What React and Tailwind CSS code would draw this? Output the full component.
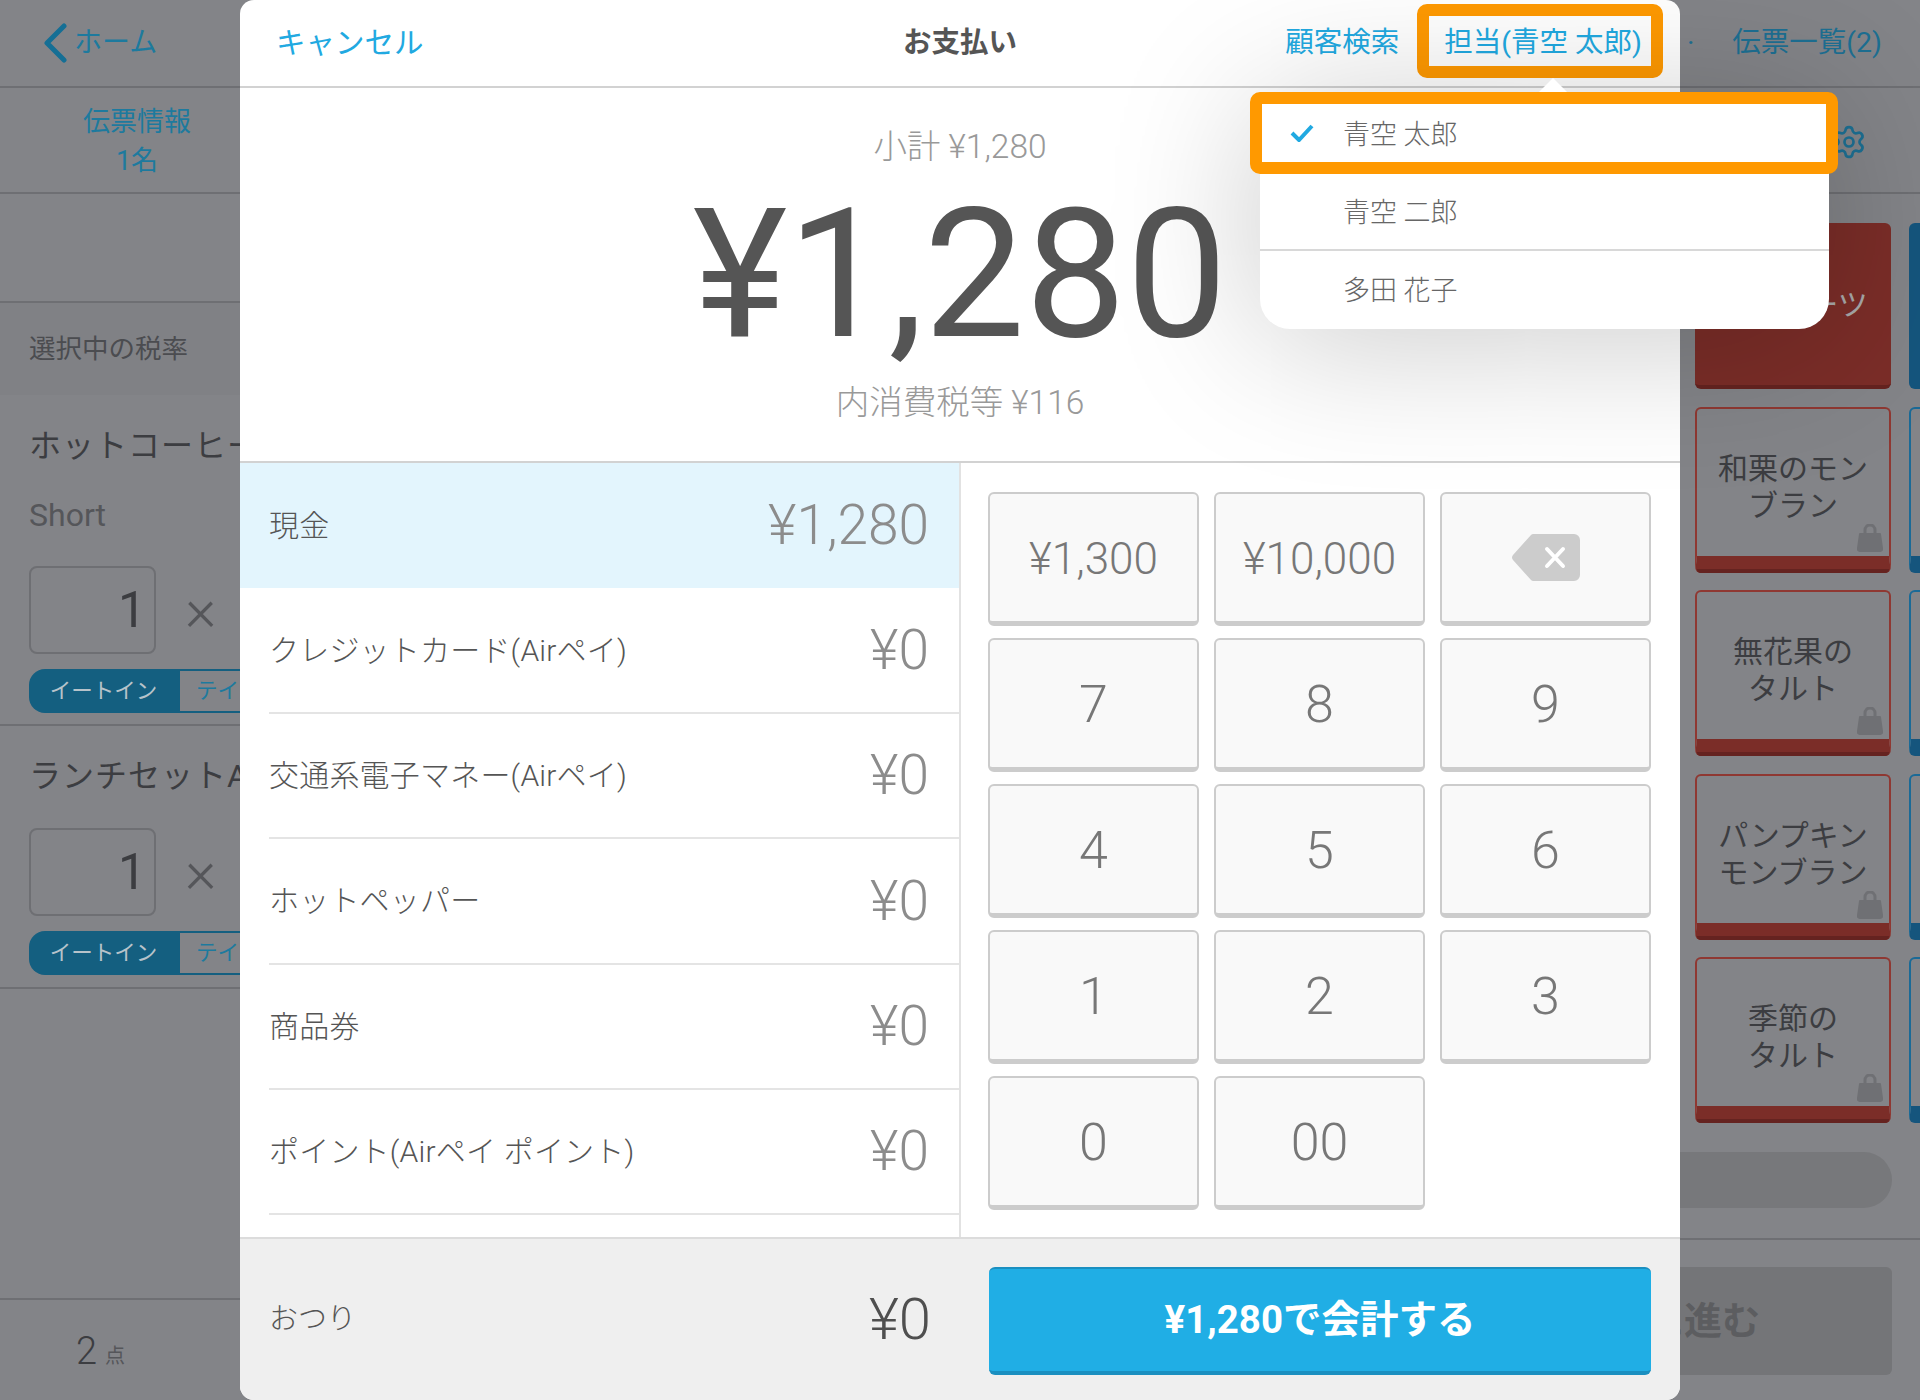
import React from 'react';
import { Settings } from 'lucide-react';

const FONT = "font-['Roboto','Noto_Sans_CJK_JP',sans-serif]";

const payments = [
  { label: '現金', amount: '¥1,280', active: true },
  { label: 'クレジットカード(Airペイ)', amount: '¥0' },
  { label: '交通系電子マネー(Airペイ)', amount: '¥0' },
  { label: 'ホットペッパー', amount: '¥0' },
  { label: '商品券', amount: '¥0' },
  { label: 'ポイント(Airペイ ポイント)', amount: '¥0' },
];

const keys = ['¥1,300', '¥10,000', 'back', '7', '8', '9', '4', '5', '6', '1', '2', '3', '0', '00'];

const tiles = [
  ['和栗のモン', 'ブラン'],
  ['無花果の', 'タルト'],
  ['パンプキン', 'モンブラン'],
  ['季節の', 'タルト'],
];

function Bag() {
  return (
    <svg className="absolute right-[6px] bottom-[4px]" width="26" height="28" viewBox="0 0 26 28" fill="#6f7074">
      <path d="M8 10V6a5 5 0 0 1 10 0v4" fill="none" stroke="#6f7074" strokeWidth="3" />
      <path d="M3 9h20a1 1 0 0 1 1 1l2 14a3 3 0 0 1-3 4H3a3 3 0 0 1-3-4l2-14a1 1 0 0 1 1-1z" />
    </svg>
  );
}

function Qty() {
  return (
    <div className="flex items-center">
      <div className="w-[127px] h-[88px] rounded-[8px] border-2 border-[#6e6f73] flex items-center justify-end pr-[8px] text-[50px] font-normal text-[#3c3d41]">1</div>
      <div className="ml-[29px] text-[60px] leading-[60px] font-light text-[#55565a]">×</div>
    </div>
  );
}

function Seg() {
  return (
    <div className="flex w-[300px] h-[44px] mt-[15px] text-[21.5px]">
      <div className="w-[149px] bg-[#145f80] rounded-l-[16px] flex items-center justify-center text-[#b7c3ca]">イートイン</div>
      <div className="flex-1 border-2 border-[#145f80] flex items-center pl-[16px] text-[#1d7a9e] whitespace-nowrap">テイクアウト</div>
    </div>
  );
}

function Payment() {
  return (
    <div className="absolute left-[240px] top-0 w-[1440px] h-[1400px] bg-white rounded-[14px] flex flex-col">
      <div className="h-[88px] shrink-0 border-b-2 border-[#d2d2d2] grid grid-cols-[1fr_auto_1fr] items-center text-[28.5px] text-[#21a9e1]">
        <div className="pl-[36px] text-[29.5px]">キャンセル</div>
        <div className="font-semibold text-[#555] text-[28.5px]">お支払い</div>
        <div className="flex justify-end pr-[38px] gap-[45px] whitespace-nowrap">
          <span>顧客検索</span>
          <span>担当(青空 太郎)</span>
        </div>
      </div>

      <div className="h-[375px] shrink-0 border-b-2 border-[#d2d2d2] flex flex-col items-center pt-[35px]">
        <div className="text-[33.5px] leading-[48px] font-light text-[#999]">小計 ¥1,280</div>
        <div className="text-[180px] leading-[180px] font-normal text-[#555] mt-[14px]">¥1,280</div>
        <div className="text-[33.5px] leading-[48px] font-light text-[#999] mt-[14px]">内消費税等 ¥116</div>
      </div>

      <div className="flex-1 flex min-h-0">
        <div className="w-[721px] border-r-2 border-[#e2e2e2]">
          {payments.map((p) => (
            <div key={p.label} className={p.active ? 'h-[125.4px] bg-[#e3f5fd] pl-[29px]' : 'h-[125.4px] pl-[29px]'}>
              <div className={p.active ? 'h-full flex items-center justify-between pr-[30px]' : 'h-full flex items-center justify-between pr-[30px] border-b-2 border-[#e4e4e4]'}>
                <span className="text-[30px] font-light tracking-[0.2px] text-[#555]">{p.label}</span>
                <span className="text-[55px] font-light text-[#8c8c8c]">{p.amount}</span>
              </div>
            </div>
          ))}
        </div>
        <div className="flex-1 pl-[27px] pt-[29px]">
          <div className="grid grid-cols-[211px_211px_211px] auto-rows-[134px] gap-x-[15px] gap-y-[12px]">
            {keys.map((k) => (
              <div key={k} className="rounded-[6px] bg-[#f9f9f9] border-2 border-b-[5px] border-[#cccccc] flex items-center justify-center pt-[3px] text-[#777] font-light">
                {k === 'back' ? (
                  <svg className="-mt-[3px]" width="68" height="47" viewBox="0 0 68 47">
                    <path d="M22 0h40a6 6 0 0 1 6 6v35a6 6 0 0 1-6 6H22a4 4 0 0 1-3-1L1 26a4 4 0 0 1 0-5L19 1a4 4 0 0 1 3-1z" fill="#cccccc" />
                    <path d="M35 15l16 17M51 15L35 32" stroke="#fff" strokeWidth="4" strokeLinecap="round" />
                  </svg>
                ) : (
                  <span className={k.startsWith('¥') ? 'text-[44px]' : 'text-[52px]'}>{k}</span>
                )}
              </div>
            ))}
          </div>
        </div>
      </div>

      <div className="h-[163px] shrink-0 bg-[#efefef] border-t-2 border-[#dcdcdc] rounded-b-[14px] flex">
        <div className="w-[721px] pl-[29px] pr-[30px] flex items-center justify-between">
          <span className="text-[29px] font-light text-[#555]">おつり</span>
          <span className="text-[58px] font-light text-[#4f4f4f]">¥0</span>
        </div>
        <div className="flex-1 pl-[28px] pr-[29px] pt-[28px]">
          <div className="h-[108px] rounded-[6px] bg-[#20aee5] border-t-2 border-b-[4px] border-[#1a8fc0] flex items-center justify-center text-[38.5px] font-bold text-white">¥1,280で会計する</div>
        </div>
      </div>

      {/* 担当 highlight */}
      <div className="absolute left-[1177px] top-[4px] w-[246px] h-[74px] border-[12px] border-[#ff9900] rounded-[10px]" />

      {/* staff popover */}
      <div className="absolute left-[1020px] top-[95px] w-[569px] h-[234px] bg-white rounded-b-[30px] rounded-t-[14px] shadow-[0_10px_150px_rgba(0,0,0,0.22)] text-[27px] font-light text-[#666]">
        <div className="absolute left-[276px] -top-[17px] w-0 h-0 border-x-[17px] border-x-transparent border-b-[17px] border-b-white" />
        <div className="h-[78px] flex items-center pl-[83px] pt-[2px] relative">
          <svg className="absolute left-[30px] top-[29px]" width="24" height="18" viewBox="0 0 24 18" fill="none">
            <path d="M2 9l7 7L22 2" stroke="#21a9e1" strokeWidth="4" />
          </svg>
          青空 太郎
        </div>
        <div className="h-[78px] flex items-center pl-[83px] pt-[4px] border-b-2 border-[#d8d8d8]">青空 二郎</div>
        <div className="h-[78px] flex items-center pl-[83px] pt-[2px]">多田 花子</div>
      </div>
      <div className="absolute left-[1010px] top-[92px] w-[588px] h-[82px] border-[12px] border-[#ff9900] rounded-[10px]" />
    </div>
  );
}

export default function App() {
  return (
    <div className={`relative w-[1920px] h-[1400px] overflow-hidden flex bg-[#838488] ${FONT}`}>
      <div className="w-[360px] shrink-0 flex flex-col text-[#1d7a9e]">
        <div className="h-[88px] shrink-0 border-b-2 border-[#6e6f73] flex items-center pl-[43px] gap-[7px]">
          <svg width="24" height="42" viewBox="0 0 24 42" fill="none">
            <path d="M21 4L4 21l17 17" stroke="#156f95" strokeWidth="5" strokeLinecap="round" strokeLinejoin="round" />
          </svg>
          <span className="text-[28px]">ホーム</span>
        </div>
        <div className="h-[106px] shrink-0 border-b-2 border-[#6e6f73] w-full">
          <div className="w-[274px] text-center text-[27px] leading-[39px] pt-[15px]">
            <div>伝票情報</div>
            <div>1名</div>
          </div>
        </div>
        <div className="h-[109px] shrink-0 border-b-2 border-[#6e6f73]" />
        <div className="h-[92px] shrink-0 bg-[#808185] flex items-center pl-[29px] text-[26.5px] text-[#4b4c50]">選択中の税率</div>

        <div className="h-[331px] shrink-0 border-b-2 border-[#6e6f73] pl-[29px] flex flex-col">
          <div className="text-[32px] leading-[40px] tracking-[1px] text-[#3c3d41] mt-[31px] whitespace-nowrap">ホットコーヒー</div>
          <div className="text-[32px] leading-[40px] text-[#55565a] mt-[29px]">Short</div>
          <div className="mt-[31px]"><Qty /></div>
          <Seg />
        </div>

        <div className="h-[263px] shrink-0 border-b-2 border-[#6e6f73] pl-[29px] flex flex-col">
          <div className="text-[32px] leading-[40px] tracking-[1px] text-[#3c3d41] mt-[30px] whitespace-nowrap">ランチセットA</div>
          <div className="mt-[32px]"><Qty /></div>
          <Seg />
        </div>

        <div className="flex-1 border-b-2 border-[#6e6f73]" />
        <div className="h-[100px] shrink-0 flex items-end pb-[27px] pl-[76px] text-[#3c3d41]">
          <span className="text-[38px] font-light leading-[44px]">2</span>
          <span className="text-[20px] ml-[8px] leading-[34px] text-[#55565a]">点</span>
        </div>
      </div>

      <div className="flex-1" />

      <div className="w-[240px] shrink-0 flex flex-col">
        <div className="h-[88px] shrink-0 border-b-2 border-[#6e6f73] flex items-center justify-between pl-[7px] pr-[38px] text-[28.5px] text-[#1d6f92] whitespace-nowrap">
          <span>·</span>
          <span>伝票一覧(2)</span>
        </div>
        <div className="h-[106px] shrink-0 border-b-2 border-[#6e6f73] flex justify-end items-start pt-[36px] pr-[53px] text-[#1d6f92]">
          <Settings size={36} strokeWidth={1.8} />
        </div>
        <div className="grid grid-cols-[196px_196px] gap-x-[18px] gap-y-[17.5px] pl-[15px] pt-[29px]">
          <div className="h-[166px] rounded-[6px] bg-[#7b2d28] border-b-[4px] border-[#652320] flex items-center justify-center text-[30px] text-[#a8a8a8] whitespace-nowrap">和スイーツ</div>
          <div className="h-[166px] rounded-[6px] bg-[#15557d]" />
          {tiles.map((t) => (
            <React.Fragment key={t[0]}>
              <div className="relative h-[166px] rounded-[6px] border-2 border-[#8f3832] border-b-[17px] border-b-[#7b2d28] flex flex-col items-center justify-center pt-[9px] text-[30px] leading-[37px] text-[#3c3d41]">
                <span>{t[0]}</span>
                <span>{t[1]}</span>
                <div className="absolute left-0 right-0 -bottom-[17px] h-[4px] bg-[#652320] rounded-b-[6px]" />
                <Bag />
              </div>
              <div className="h-[166px] rounded-[6px] border-2 border-[#1a6a97] border-b-[17px] border-b-[#15557d]" />
            </React.Fragment>
          ))}
        </div>
        <div className="h-[56px] shrink-0 mt-[29px] mr-[28px] -ml-[200px] rounded-[28px] bg-[#77787b]" />
        <div className="h-[32px] shrink-0 border-b-2 border-[#6e6f73]" />
        <div className="h-[108px] shrink-0 mt-[27px] mr-[28px] -ml-[200px] rounded-[6px] bg-[#747578] flex items-center justify-end pr-[132px] text-[38px] font-bold text-[#5c5d60] whitespace-nowrap">会計に進む</div>
      </div>

      <Payment />
    </div>
  );
}
